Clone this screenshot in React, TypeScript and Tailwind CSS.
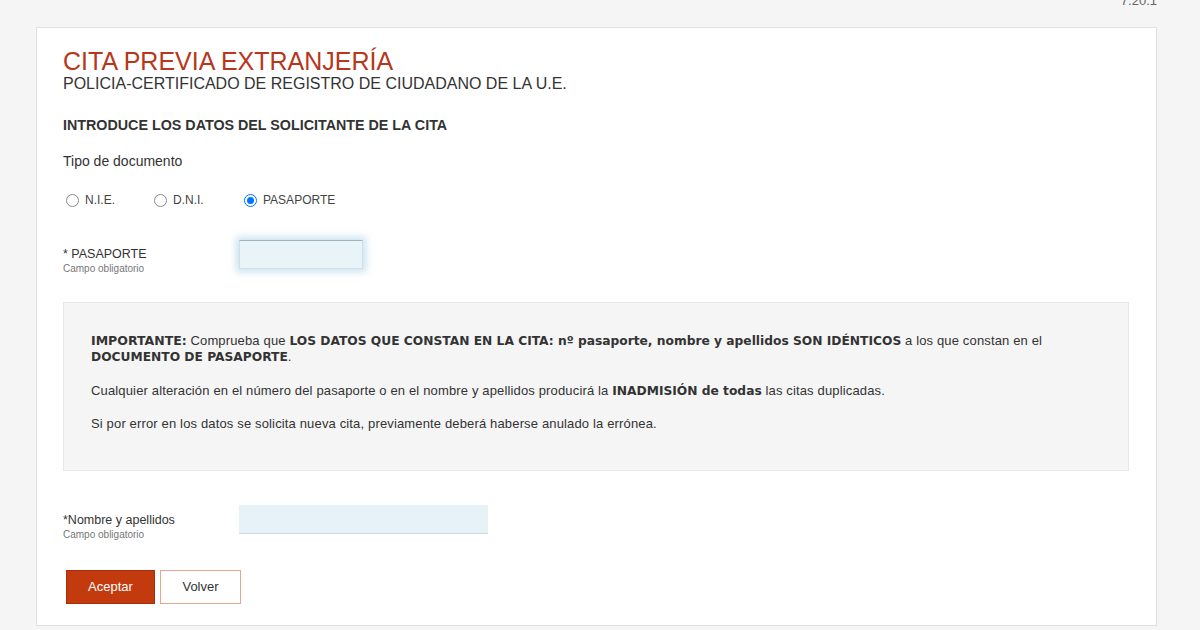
import React from 'react';

const sans = { fontFamily: '"Liberation Sans", Arial, sans-serif' };
const wide = { fontFamily: '"DejaVu Sans", Verdana, sans-serif' };

function Radio({ label, checked = false }: { label: string; checked?: boolean }) {
  return (
    <label className="flex items-center gap-[6px] text-[12px] text-[#444]">
      <span
        className={`flex h-[13px] w-[13px] items-center justify-center rounded-full border ${
          checked ? 'border-[#0075ff]' : 'border-[#8a8a8a]'
        } bg-white`}
      >
        {checked && <span className="h-[7px] w-[7px] rounded-full bg-[#0075ff]" />}
      </span>
      {label}
    </label>
  );
}

function FieldLabel({ label }: { label: string }) {
  return (
    <div className="w-[176px]">
      <div className="text-[12.5px] leading-[15px] text-[#333]">{label}</div>
      <div className="text-[10px] leading-[13px] text-[#777]">Campo obligatorio</div>
    </div>
  );
}

export default function App() {
  return (
    <div className="min-h-[630px] w-[1200px] overflow-hidden bg-[#f5f5f5]" style={sans}>
      <div className="flex h-[27px] justify-end pr-[43px]">
        <span className="-mt-[9px] text-[13px] text-[#666]">7.20.1</span>
      </div>
      <div className="ml-[36px] w-[1121px] border border-[#e0e0e0] bg-white pl-[26px] pr-[27px] pt-[20px] pb-[21px]">
        <h1 className="text-[25px] leading-[27px] text-[#b8361a]">CITA PREVIA EXTRANJERÍA</h1>
        <h2 className="text-[16px] leading-[18px] text-[#333]">POLICIA-CERTIFICADO DE REGISTRO DE CIUDADANO DE LA U.E.</h2>

        <h3 className="mt-[24px] text-[14.3px] font-bold leading-[16px] text-[#333]">
          INTRODUCE LOS DATOS DEL SOLICITANTE DE LA CITA
        </h3>

        <div className="mt-[20px] text-[14px] leading-[17px] text-[#333]">Tipo de documento</div>

        <div className="mt-[21px] flex items-center pl-[3px]">
          <div className="w-[88px]"><Radio label="N.I.E." /></div>
          <div className="w-[90px]"><Radio label="D.N.I." /></div>
          <Radio label="PASAPORTE" checked />
        </div>

        <div className="mt-[31px] flex items-start">
          <div className="pt-[7px]">
            <FieldLabel label="* PASAPORTE" />
          </div>
          <div className="h-[29px] w-[124px] border border-t-[#9fb3bf] border-x-[#cfe0e8] border-b-[#cfe0e8] bg-[#e8f4f8] shadow-[0_0_7px_3px_rgba(150,200,225,0.5)]" />
        </div>

        <div className="mt-[27px] border border-[#e8e8e8] bg-[#f5f5f5] px-[27px] pt-[30px] pb-[39px] text-[13px] leading-[15px] tracking-[0.15px] text-[#333]">
          <p>
            <b className="text-[12.5px] font-bold tracking-normal" style={wide}>IMPORTANTE:</b> Comprueba que{' '}
            <b className="text-[12.25px] font-bold tracking-normal" style={wide}>
              LOS DATOS QUE CONSTAN EN LA CITA: nº pasaporte, nombre y apellidos SON IDÉNTICOS
            </b>{' '}
            a los que constan en el{' '}
            <b className="text-[12.25px] font-bold tracking-normal" style={wide}>DOCUMENTO DE PASAPORTE</b>.
          </p>
          <p className="mt-[18px]">
            Cualquier alteración en el número del pasaporte o en el nombre y apellidos producirá la{' '}
            <b className="text-[12.25px] font-bold tracking-normal" style={wide}>INADMISIÓN de todas</b> las citas duplicadas.
          </p>
          <p className="mt-[17px]">
            Si por error en los datos se solicita nueva cita, previamente deberá haberse anulado la errónea.
          </p>
        </div>

        <div className="mt-[34px] flex items-start">
          <div className="pt-[8px]">
            <FieldLabel label="*Nombre y apellidos" />
          </div>
          <div className="h-[29px] w-[249px] border-b border-[#c9dbe3] bg-[#e6f2f8]" />
        </div>

        <div className="mt-[29px] flex gap-[5px] pl-[3px]">
          <button className="h-[34px] w-[89px] border border-[#a82e0a] bg-[#c23a0e] text-[13px] text-white">Aceptar</button>
          <button className="h-[34px] w-[81px] border border-[#e8a590] bg-white text-[13px] text-[#333]">Volver</button>
        </div>
      </div>
    </div>
  );
}
